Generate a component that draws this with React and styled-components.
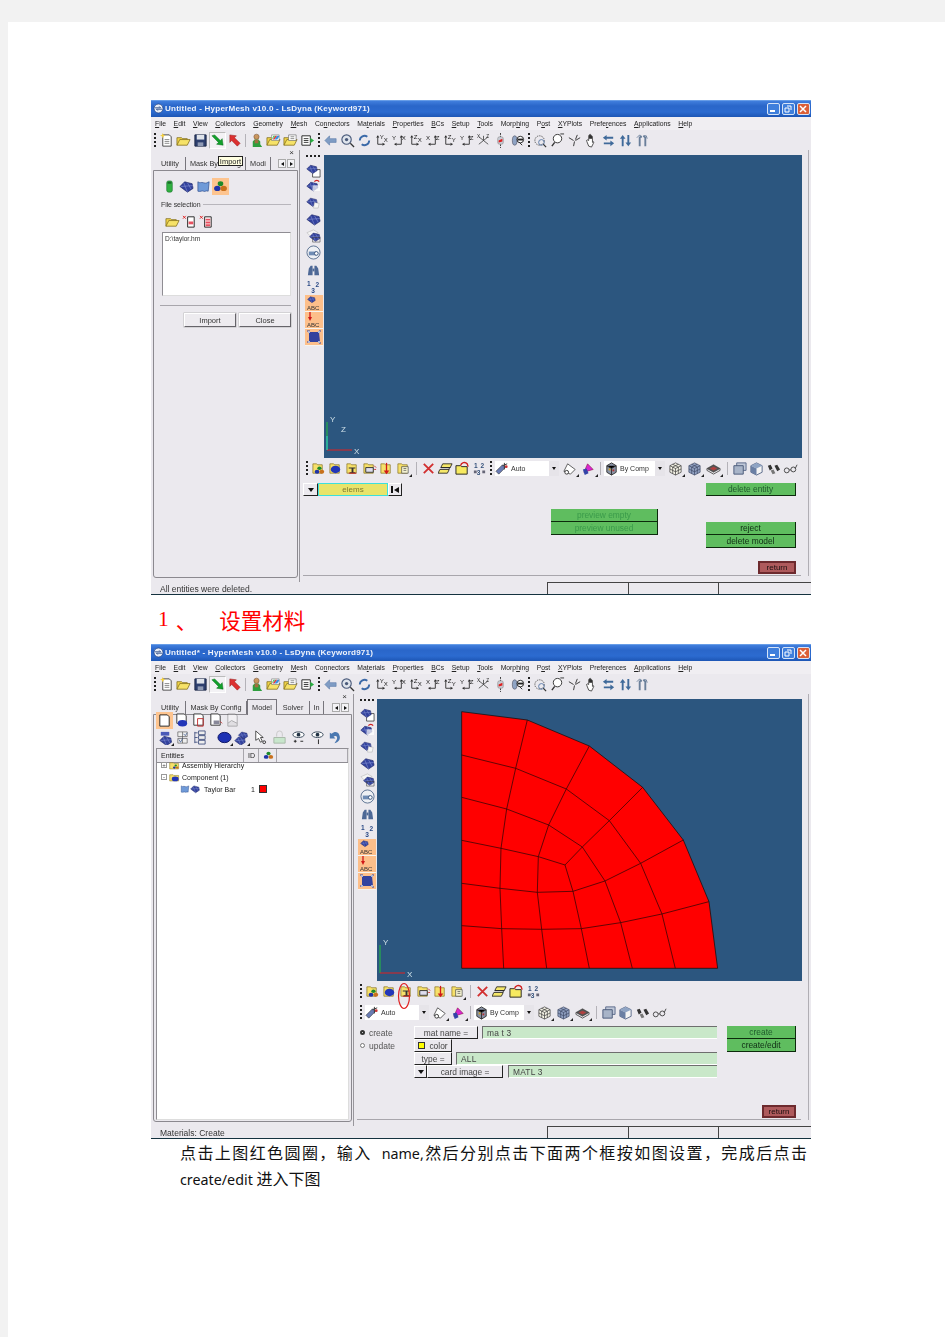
import React from 'react';
import styled, { createGlobalStyle } from 'styled-components';

const GlobalStyle = createGlobalStyle`
  body {
    margin: 0;
    background: #f2f2f2;
  }
`;

const Sheet = styled.div`
  margin: 22px 0 0 8px;
  padding: 78px 0 0 143px;
  min-height: 1237px;
  background: #fff;
  overflow: hidden;
`;

const Heading = styled.h2`
  display: flex;
  align-items: center;
  height: 49px;
  margin: 0;
  padding-left: 7px;
  color: #f00;
  font: normal 21.5px 'Liberation Serif', 'Noto Sans CJK SC', serif;
  span:nth-child(2) { margin-left: 7px; }
  span:nth-child(3) { margin-left: 22px; }
`;

const Para = styled.p`
  width: 627px;
  margin: 0 0 0 29px;
  color: #111;
  font: 16px/26px 'Noto Sans CJK SC', sans-serif;
  text-align: justify;
  span { font: 14.3px 'Noto Sans', sans-serif; white-space: nowrap; }
`;

/* ---- window chrome ---- */

const Win = styled.div`
  position: relative;
  width: 660px;
  height: 495px;
  box-sizing: border-box;
  display: flex;
  flex-direction: column;
  background: #ebe9ee;
  border-bottom: 1px solid #14323f;
  color: #222;
  font-family: 'Liberation Sans', sans-serif;
  filter: blur(0.3px);
`;

const TitleBar = styled.div`
  height: 17px;
  flex: none;
  display: flex;
  align-items: center;
  padding: 0 1px 0 2px;
  background: linear-gradient(#7fb0ee 0, #3f7ddc 8%, #2a66c9 35%, #2c6bd0 70%, #1d56b5 100%);
  color: #eef3fb;
  font-size: 8.1px;
  font-weight: bold;
  letter-spacing: 0.2px;
  svg { margin-right: 1px; }
`;

const TitleText = styled.span`
  flex: 1;
`;

const CapBtn = styled.div`
  width: 13px;
  height: 12px;
  margin-left: 2px;
  display: flex;
  align-items: center;
  justify-content: center;
  border: 1px solid #d6e4f7;
  border-radius: 2px;
  box-sizing: border-box;
  background: ${(p) => (p.$close ? '#dc5f36' : '#3f7fdc')};
`;

const MenuBar = styled.div`
  height: 13px;
  flex: none;
  display: flex;
  align-items: center;
  gap: 7.65px;
  padding-left: 4px;
  background: #f0eef2;
  font-size: 6.8px;
  white-space: nowrap;
`;

const Toolbar = styled.div`
  height: ${(p) => p.$h || 19}px;
  flex: none;
  display: flex;
  align-items: center;
  padding-left: 3px;
`;

const Tool = styled.div`
  position: relative;
  width: ${(p) => p.$w || 17}px;
  height: 17px;
  flex: none;
  display: flex;
  align-items: center;
  justify-content: center;
  box-sizing: border-box;
  background: ${(p) => (p.$on ? '#fdc48f' : 'transparent')};
  ${(p) => p.$press && 'border: 1px solid; border-color: #bbb #fff #fff #bbb; background: #f3f2f5;'}
  &::after {
    content: '';
    display: ${(p) => (p.$menu ? 'block' : 'none')};
    position: absolute;
    right: 0;
    bottom: 0;
    border-left: 3px solid transparent;
    border-bottom: 3px solid #222;
  }
`;

const Dots = styled.div`
  width: 2px;
  height: 15px;
  flex: none;
  margin: 0 2px 0 ${(p) => (p.$first ? 0 : 2)}px;
  background: repeating-linear-gradient(#222 0 2px, transparent 2px 4px);
`;

const Sep = styled.div`
  width: 1px;
  height: 13px;
  flex: none;
  margin: ${(p) => (p.$wide ? '0 3px 0 4px' : '0 2px 0 2px')};
  background: #b4b2b8;
`;

const ComboBox = styled.div`
  width: ${(p) => p.$w}px;
  height: 15px;
  flex: none;
  margin: 0 1px;
  display: flex;
  align-items: center;
  background: #fff;
  font-size: 7px;
  color: #333;
  svg { flex: none; }
  span { flex: 1; margin-left: 1px; }
`;

const ComboArrow = styled.div`
  width: 10px;
  height: 100%;
  display: flex;
  align-items: center;
  justify-content: center;
  background: #e6e4e9;
  &::before {
    content: '';
    border: 2.5px solid transparent;
    border-top: 3px solid #111;
    border-bottom: 0;
  }
`;

const Body = styled.div`
  flex: 1;
  min-height: 0;
  display: flex;
  padding-left: 1px;
`;

/* ---- left panel ---- */

const Panel = styled.div`
  position: relative;
  width: ${(p) => p.$w}px;
  flex: none;
  display: flex;
  flex-direction: column;
  padding: 0 1px 4px 1px;
  box-sizing: border-box;
  border-right: 1px solid #98969c;
`;

const TabRow = styled.div`
  height: 20px;
  flex: none;
  display: flex;
  align-items: flex-end;
  padding-left: 2px;
`;

const Tab = styled.div`
  height: ${(p) => (p.$on ? 16 : 13)}px;
  width: ${(p) => p.$w}px;
  flex: none;
  box-sizing: border-box;
  display: flex;
  align-items: center;
  justify-content: center;
  overflow: hidden;
  white-space: nowrap;
  font-size: 7.3px;
  color: #333;
  border-right: 1px solid #77757c;
  ${(p) => p.$on && 'border-left: 1px solid #77757c; border-top: 1px solid #77757c; background: #ebe9ee; margin-bottom: -1px; z-index: 1;'}
`;

const TabArrows = styled.div`
  margin: 0 2px 2px auto;
  display: flex;
  gap: 1px;
  padding-right: 1px;
`;

const TabArrow = styled.div`
  width: 8px;
  height: 9px;
  display: flex;
  align-items: center;
  justify-content: center;
  background: #f4f3f6;
  border: 1px solid #aaa;
  box-sizing: border-box;
  &::before {
    content: '';
    border: 2px solid transparent;
    ${(p) => (p.$left ? 'border-right: 3px solid #111; border-left: 0;' : 'border-left: 3px solid #111; border-right: 0;')}
  }
`;

const CloseMark = styled.div`
  position: absolute;
  top: -2px;
  right: ${(p) => p.$r}px;
  font-size: 8px;
  color: #333;
`;

const Tip = styled.div`
  position: absolute;
  left: 66px;
  top: 6px;
  width: 25px;
  height: 10px;
  line-height: 9px;
  box-sizing: border-box;
  text-align: center;
  background: #ffffe1;
  border: 1px solid #222;
  font-size: 7.5px;
  z-index: 2;
`;

const TabBox = styled.div`
  flex: 1;
  min-height: 0;
  display: flex;
  flex-direction: column;
  border: 1px solid #8b898f;
  border-radius: 0 0 3px 3px;
  box-sizing: border-box;
`;

const IconLine = styled.div`
  display: flex;
  align-items: center;
  flex: none;
  margin: ${(p) => p.$m};
  gap: ${(p) => p.$gap || 0}px;
`;

const GroupLabel = styled.div`
  margin: 6px 6px 0 7px;
  display: flex;
  align-items: center;
  gap: 3px;
  font-size: 7px;
  letter-spacing: -0.1px;
  color: #333;
  &::after {
    content: '';
    flex: 1;
    height: 1px;
    background: #b8b6bc;
  }
`;

const FileList = styled.div`
  height: 64px;
  margin: 2px 6px 0 8px;
  padding: 2px 2px;
  box-sizing: border-box;
  background: #fff;
  border: 1px solid;
  border-color: #8f8d93 #ddd #ddd #8f8d93;
  font-size: 6.6px;
  color: #333;
`;

const Rule = styled.div`
  height: 1px;
  margin: 9px 6px 0 6px;
  background: #a8a6ac;
`;

const PanelButtons = styled.div`
  display: flex;
  justify-content: flex-end;
  gap: 3px;
  margin: 7px 6px 0 0;
`;

const PanelButton = styled.div`
  width: 52px;
  height: 14px;
  display: flex;
  align-items: center;
  justify-content: center;
  box-sizing: border-box;
  background: #edebef;
  border: 1px solid;
  border-color: #fff #66646a #66646a #fff;
  box-shadow: 0 0 0 0.5px #bbb;
  font-size: 7.5px;
  color: #333;
`;

const Tree = styled.div`
  flex: 1;
  margin: 2px 2px 1px 2px;
  background: #fff;
  border: 1px solid;
  border-color: #8f8d93 #ddd #ddd #8f8d93;
  font-size: 7px;
  color: #222;
`;

const TreeHead = styled.div`
  height: 13px;
  margin-bottom: -4px;
  display: grid;
  grid-template-columns: 87px 15px 18px 1fr;
  background: #ebe9ee;
  border-bottom: 1px solid #8f8d93;
  div {
    display: flex;
    align-items: center;
    padding-left: 4px;
    border-right: 1px solid #a8a6ac;
  }
`;

const TreeRow = styled.div`
  position: relative;
  height: 12px;
  display: flex;
  align-items: center;
  padding-left: ${(p) => p.$indent}px;
  svg { flex: none; }
`;

const TreeCell = styled.span`
  width: ${(p) => p.$w}px;
  margin-left: ${(p) => p.$ml || 0}px;
  flex: none;
`;

const Expander = styled.div`
  width: 6px;
  height: 6px;
  margin-right: 2px;
  box-sizing: border-box;
  border: 1px solid #999;
  font-size: 6px;
  line-height: 4px;
  text-align: center;
  color: #444;
`;

const Swatch = styled.div`
  width: ${(p) => p.$s}px;
  height: ${(p) => p.$s}px;
  flex: none;
  background: ${(p) => p.$c};
  border: 1px solid #333;
  box-sizing: border-box;
`;

/* ---- graphics area ---- */

const Right = styled.div`
  flex: 1;
  min-width: 0;
  margin-left: ${(p) => p.$gap}px;
  margin-bottom: 6px;
  display: flex;
  flex-direction: column;
  border-right: 1px solid #b0aeb4;
  margin-right: 2px;
`;

const Stage = styled.div`
  height: ${(p) => p.$h}px;
  flex: none;
  display: flex;
  padding-top: 5px;
  box-sizing: content-box;
`;

const Strip = styled.div`
  width: ${(p) => p.$w}px;
  flex: none;
  display: flex;
  flex-direction: column;
  align-items: center;
`;

const StripDots = styled.div`
  width: 15px;
  height: 2px;
  margin-bottom: 5px;
  background: repeating-linear-gradient(90deg, #222 0 2px, transparent 2px 4px);
`;

const StripCell = styled.div`
  width: 18px;
  height: 17px;
  display: flex;
  align-items: center;
  justify-content: center;
  flex: none;
  box-sizing: border-box;
  background: ${(p) => (p.$on ? '#fdbf8a' : 'transparent')};
  ${(p) => p.$on && 'border-bottom: 1px solid #f6f3ee;'}
  ${(p) => p.$tight && 'margin-bottom: -3px;'}
`;

const Viewport = styled.div`
  position: relative;
  width: ${(p) => p.$w}px;
  flex: none;
  background: #2c567f;
  overflow: hidden;
`;

const Triad = styled.svg`
  position: absolute;
  left: 0;
  bottom: 0;
`;

const MeshSvg = styled.svg`
  position: absolute;
  left: 0;
  top: 0;
`;

const Annot = styled.svg`
  position: absolute;
  left: 246px;
  top: 337px;
  z-index: 3;
`;

const Controls = styled.div`
  flex: 1;
  min-height: 0;
  display: flex;
  margin-right: 7px;
  border-bottom: 1px solid #a8a6ac;
`;

const Col = styled.div`
  display: flex;
  flex-direction: column;
  flex: none;
  width: ${(p) => p.$w}px;
  margin-left: ${(p) => p.$ml || 0}px;
  padding-top: ${(p) => p.$pt || 0}px;
  padding-bottom: 1px;
  box-sizing: border-box;
`;

const Row = styled.div`
  display: flex;
  flex: none;
  margin-left: ${(p) => p.$ml || 0}px;
`;

const GreenBtn = styled.div`
  height: 13px;
  flex: none;
  margin-top: ${(p) => p.$mt || 0}px;
  display: flex;
  align-items: center;
  justify-content: center;
  box-sizing: border-box;
  background: #5fbd5f;
  border-right: 1px solid #0c2a0c;
  border-bottom: 1px solid #0c2a0c;
  font-size: 8.4px;
  color: ${(p) => (p.$dim ? '#3a9a4a' : p.$soft ? '#1f5a2c' : '#0f2c14')};
`;

const ReturnBtn = styled.div`
  width: ${(p) => p.$w}px;
  height: 13px;
  flex: none;
  margin: auto 0 0 auto;
  display: flex;
  align-items: center;
  justify-content: center;
  box-sizing: border-box;
  background: #ae5a5c;
  border: 2px solid #6d2a2e;
  font-size: 8px;
  color: #1c1010;
`;

const DarkBtn = styled.div`
  width: ${(p) => p.$w}px;
  height: 13px;
  flex: none;
  display: flex;
  align-items: center;
  justify-content: center;
  gap: 4px;
  box-sizing: border-box;
  background: #ebe9ee;
  border: 1px solid;
  border-color: #fff #222 #222 #fff;
  font-size: 8.4px;
  color: #444;
  &::before {
    content: '';
    display: ${(p) => (p.$arrow ? 'block' : 'none')};
    border: 3.5px solid transparent;
    border-top: 4px solid #111;
    border-bottom: 0;
  }
`;

const SkipBtn = styled(DarkBtn)`
  gap: 1px;
  &::before {
    display: block;
    border: 3.5px solid transparent;
    border-right: 5px solid #111;
    border-left: 0;
  }
  i { order: -1; width: 2px; height: 7px; background: #111; }
`;

const Entity = styled.div`
  width: 70px;
  height: 13px;
  display: flex;
  align-items: center;
  justify-content: center;
  box-sizing: border-box;
  background: #e8e46a;
  border: 1px solid #3ce0dc;
  font-size: 8px;
  color: #7d7a30;
`;

const Field = styled.div`
  flex: 1;
  height: 13px;
  margin-left: ${(p) => p.$ml}px;
  padding-left: 4px;
  box-sizing: border-box;
  display: flex;
  align-items: center;
  background: #c9e8c9;
  border-top: 1px solid #6e6e6e;
  border-left: 1px solid #6e6e6e;
  border-bottom: 1px solid #fff;
  font-size: 8.4px;
  color: #444;
  letter-spacing: 0.2px;
`;

const Radio = styled.div`
  display: flex;
  align-items: center;
  gap: 4px;
  height: 13px;
  font-size: 8.5px;
  color: #555;
  &::before {
    content: '';
    width: 5px;
    height: 5px;
    box-sizing: border-box;
    border-radius: 50%;
    border: ${(p) => (p.$on ? '2px solid #333' : '1px solid #777')};
    background: #fff;
  }
`;

const StatusWrap = styled.div`
  height: 12px;
  flex: none;
  display: flex;
  align-items: center;
  padding-left: 9px;
  font-size: 8.5px;
  color: #333;
  span { flex: 1; padding-top: 2px; }
`;

const StatusCell = styled.div`
  width: ${(p) => p.$w}px;
  height: 100%;
  box-sizing: border-box;
  border-top: 1px solid #444;
  border-left: 1px solid #444;
`;

/* ---- icon drawings, 16x16 ---- */

const Blob = ({ x = 0, y = 0, s = 1, c = '#33429e' }) => (
  <g transform={`translate(${x} ${y}) scale(${s})`}>
    <path d="M1 8 6 3l8 2 1 5-6 4z" fill={c} stroke="#1c2566" strokeWidth=".7" />
    <path d="M5 4 9 14M9 4 13 11M2 8 15 7" stroke="#9aa8e0" strokeWidth=".5" fill="none" />
  </g>
);

const FolderBack = () => <path d="M2 5V3h4l1 1h5v9H2z" fill="#f6e06a" stroke="#7d6a18" strokeWidth=".7" />;

const FolderOpen = () => (
  <g>
    <path d="M1 13V5h5l1 1h5v2" fill="#f3d64a" stroke="#7d6a18" strokeWidth=".8" />
    <path d="M1 13l3-6h11l-3 6z" fill="#f6e268" stroke="#7d6a18" strokeWidth=".8" />
  </g>
);

const Balls = ({ x = 0, y = 0, s = 1 }) => (
  <g transform={`translate(${x} ${y}) scale(${s})`}>
    <ellipse cx="8" cy="5" rx="3" ry="2.6" fill="#1d8a2a" />
    <ellipse cx="4.6" cy="10" rx="3.4" ry="2.8" fill="#1f33a8" />
    <ellipse cx="11.4" cy="10" rx="3.4" ry="2.8" fill="#c8701c" />
  </g>
);

const AxisL = ({ a, b }) => (
  <g>
    <path d="M4 3v9h7M3 5l1-2 1 2M9 11l2 1-2 1" stroke="#222" strokeWidth=".9" fill="none" />
    <text x="6" y="6.500" fontSize="6.500" fill="#222">{a}</text>
    <text x="10.500" y="10" fontSize="6.500" fill="#222">{b}</text>
  </g>
);

const AxisR = ({ a, b }) => (
  <g>
    <path d="M11 3v9H4M10 5l1-2 1 2M6 11l-2 1 2 1" stroke="#222" strokeWidth=".9" fill="none" />
    <text x="1" y="7" fontSize="6.500" fill="#222">{a}</text>
    <text x="11.500" y="7" fontSize="6.500" fill="#222">{b}</text>
  </g>
);

const MeshCard = () => (
  <g>
    <path d="M7 7h8v8H7z" fill="#fff" stroke="#333" strokeWidth=".8" />
    <Blob x={0} y={0} s={0.8} />
  </g>
);

const ICONS = {
  new: <g><path d="M4 2h7l2 2v10H4z" fill="#fff" stroke="#333" strokeWidth=".9" /><path d="M6 7h5M6 9h5M6 11h5" stroke="#555" strokeWidth=".7" /><path d="M4 0l1 2 2 .5-2 1-1 2-1-2-2-1 2-.5z" fill="#f4d040" /></g>,
  open: <FolderOpen />,
  save: <g><path d="M2 2h12v12H2z" fill="#2d3f6e" stroke="#1c2746" /><path d="M4 2h8v5H4z" fill="#dfe3ea" /><path d="M5 10h6v4H5z" fill="#8f9ab4" /></g>,
  imp: <path d="M2 3l3-1 6 6 2-2 1 7-7-1 2-2-6-6z" fill="#12a02c" stroke="#0c6a1c" strokeWidth=".5" />,
  exp: <path d="M3 2l7 1-2 2 6 6-3 3-6-6-2 2z" fill="#dc3030" stroke="#8c1818" strokeWidth=".5" />,
  user: <g><circle cx="8" cy="4" r="2.8" fill="#c9965f" stroke="#6a4020" strokeWidth=".5" /><path d="M4 15V9l2-2h4l2 2v3l2 3z" fill="#2e9e3e" /><path d="M6 7h4v4H6z" fill="#a07040" /></g>,
  fcolor: <g><FolderOpen /><path d="M6 2h8v6H6z" fill="#fff" stroke="#555" strokeWidth=".5" /><path d="M7 7l3-4h2l-3 4z" fill="#e03a3a" /><path d="M9 7l3-4h2v1l-2 3z" fill="#3a8ee0" /><path d="M6 7l2-4h2z" fill="#3ac050" /></g>,
  fdoc: <g><FolderOpen /><path d="M6 2h8v6H6z" fill="#fff" stroke="#555" strokeWidth=".6" /><path d="M8 4h4M8 6h4" stroke="#555" strokeWidth=".7" /></g>,
  docarrow: <g><path d="M2 3h9v10H2z" fill="#fff" stroke="#222" /><path d="M4 6h5M4 8h5M4 10h5" stroke="#333" /><path d="M11 5l4 3-4 3z" fill="#28b040" /></g>,
  back: <path d="M2 8l5-5v3h7v4H7v3z" fill="#7f9cc4" stroke="#5a7aa8" strokeWidth=".6" />,
  zoomgear: <g><circle cx="7" cy="7" r="5" fill="#dfe4ec" stroke="#4a5a7a" strokeWidth="1.2" /><circle cx="7" cy="7" r="1.8" fill="#4a5a7a" /><path d="M11 11l4 4" stroke="#333" strokeWidth="1.4" /></g>,
  rotate: <g fill="none" stroke="#3c6aa8" strokeWidth="2"><path d="M3 8a5 5 0 0 1 8-4" /><path d="M13 8a5 5 0 0 1-8 4" /></g>,
  axYX: <AxisL a="Y" b="X" />,
  axXY: <AxisR a="Y" b="X" />,
  axZX: <AxisL a="Z" b="X" />,
  axXZ: <AxisR a="X" b="Z" />,
  axZY: <AxisL a="Z" b="Y" />,
  axYZ: <AxisR a="Y" b="Z" />,
  axIso: <g stroke="#333" strokeWidth=".8" fill="none"><path d="M8 8V3M8 8l-5 4M8 8l5 4M8 8l-5-4M8 8l5-4" /><text x="1" y="5" fontSize="5" fill="#333" stroke="none">X</text><text x="11" y="5" fontSize="5" fill="#333" stroke="none">Z</text></g>,
  section: <g><path d="M8 0v16" stroke="#333" strokeDasharray="2 1" /><rect x="5" y="4" width="6" height="8" rx="2" fill="#c8ccd4" stroke="#777" strokeWidth=".5" /><path d="M6 8l4-2v3l-4 1z" fill="#e02020" /></g>,
  eyes: <g><ellipse cx="5" cy="8" rx="2.5" ry="5" fill="#8fa4c4" stroke="#445" strokeWidth=".6" /><circle cx="11" cy="7" r="3.5" fill="#fff" stroke="#222" /><path d="M8 6h6v2H8z" fill="#222" /><path d="M10 10l3 3" stroke="#222" /></g>,
  zoomdash: <g><circle cx="7" cy="8" r="5" fill="none" stroke="#555" strokeWidth="1" strokeDasharray="1.5 1" /><circle cx="9" cy="10" r="3" fill="none" stroke="#5a7aa8" /><path d="M11 12l3 3" stroke="#333" strokeWidth="1.2" /></g>,
  zoomin: <g><circle cx="8" cy="6" r="4.5" fill="#fff" stroke="#333" /><path d="M5 10l-3 4" stroke="#333" strokeWidth="1.5" /><path d="M11 1h4" stroke="#333" /></g>,
  star: <g stroke="#333" strokeWidth="1" fill="none"><path d="M7 8L2 5M8 9l-1 5M9 8l5-3M9 7l2-5" /></g>,
  hand: <path d="M5 14L3 9c-1-2 1-2 2-1V3c0-1 1-1 1 0v3-4c0-1 1-1 1 0v4-3c0-1 1-1 1 0v3-2c0-1 1-1 1 0v6c1-1 2-1 1 1l-2 4z" fill="#fff" stroke="#222" strokeWidth=".8" />,
  lr: <path d="M6 2L2 5l4 3V6h7V4H6zM10 8l4 3-4 3v-2H3v-2h7z" fill="#3f6a9a" />,
  ud: <path d="M5 2L2 6h2v8h2V6h2zM11 14l3-4h-2V2h-2v8H8z" fill="#3f6a9a" />,
  rot: <g fill="none" stroke="#6a7f9a" strokeWidth="2"><path d="M5 14V5l2-2" /><path d="M11 14V5L9 3" /><path d="M2 5l3-3 2 3M9 3l3 0 1 3" strokeWidth="1" /></g>,
  fcomp: <g><FolderBack /><Balls x={3} y={4} s={0.75} /></g>,
  fblob: <g><FolderBack /><ellipse cx="8" cy="9" rx="5" ry="4" fill="#2236b8" /></g>,
  fmat: <g><FolderBack /><path d="M4 7h7v1H9v4h2v1H5v-1h2V8H4z" fill="#333" /><path d="M4 13h8" stroke="#c22" /></g>,
  fprop: <g><FolderBack /><path d="M4 7h8v5H4z" fill="#dde" stroke="#333" /><path d="M13 5l2 2M13 9l2 0" stroke="#c33" /></g>,
  fload: <g><FolderBack /><path d="M8 2v10" stroke="#d01818" strokeWidth="1.4" /><path d="M5 10l3 4 3-4z" fill="#d01818" /></g>,
  fcustom: <g><FolderBack /><path d="M6 6h7v7H6z" fill="#f4f2d0" stroke="#444" strokeWidth=".7" /><path d="M8 8h3M8 10h3" stroke="#444" strokeWidth=".7" /></g>,
  x: <path d="M3 3l10 10M13 3L3 13" stroke="#d23030" strokeWidth="2" />,
  sheets: <g fill="#f6e86a" stroke="#222" strokeWidth=".9"><path d="M5 3h10l-2 4H3z" /><path d="M3 7h10l-2 2" fill="none" /><path d="M2 9h10l-2 4H0z" /></g>,
  openred: <g><path d="M1 5h5l1 1h6v8H1z" fill="#f7ea60" stroke="#222" /><path d="M6 5a4 4 0 0 1 7-2l1 3" stroke="#d02020" strokeWidth="1.5" fill="none" /></g>,
  numbers: <g fill="#33507a" fontSize="7" fontWeight="bold"><text x="2" y="7">1</text><text x="9" y="7">2</text><text x="5" y="15">3</text><path d="M2 10h3v3H2zM11 10h3v3h-3z" fill="#667" /></g>,
  auto: <g><path d="M1 11l7-7 3 3-7 7z" fill="#6a7cb4" stroke="#333" strokeWidth=".6" /><path d="M10 2v7M8 5l5-2" stroke="#333" /><circle cx="12" cy="6" r="1.5" fill="#c33" /></g>,
  cone: <g><path d="M2 11l4-8 8 6-5 5z" fill="#fff" stroke="#333" strokeWidth=".8" /><circle cx="5" cy="12" r="2" fill="#fff" stroke="#333" /></g>,
  conefill: <g><path d="M3 12l4-9 6 6z" fill="#d828d0" stroke="#702" strokeWidth=".5" /><path d="M2 9l4-1 2 5-4 2z" fill="#3344a8" /></g>,
  bycomp: <g><path d="M3 5l5-3 5 3v7l-5 3-5-3z" fill="#8b95a8" stroke="#333" /><path d="M3 5l5 3 5-3M8 8v7" stroke="#333" /><path d="M5 8h2v2H5z" fill="#d0a020" /><path d="M9 9h2v2H9z" fill="#b03030" /></g>,
  wire: <g fill="#f3f1e4" stroke="#333" strokeWidth=".7"><path d="M2 5l6-3 6 3v7l-6 3-6-3z" /><path d="M2 5l6 3 6-3M8 8v7M5 3.5l6 3v7M11 3.5l-6 3v7M2 8.500l6 3 6-3" fill="none" /></g>,
  solidwire: <g fill="#8f9fc0" stroke="#3a4560" strokeWidth=".7"><path d="M2 5l6-3 6 3v7l-6 3-6-3z" /><path d="M2 5l6 3 6-3M8 8v7M5 3.5l6 3v7M11 3.5l-6 3v7M2 8.500l6 3 6-3" fill="none" /></g>,
  plate: <g><path d="M1 8l7-4 7 4-7 4z" fill="#555" stroke="#222" strokeWidth=".5" /><path d="M4 8l4-2 4 2-4 2z" fill="#b04040" /><path d="M1 8v2l7 4 7-4V8" fill="none" stroke="#555" /></g>,
  frames: <g><path d="M5 2h10v8H5z" fill="#c0c8d8" stroke="#5a6a8a" /><path d="M2 5h10v9H2z" fill="#a8b4c8" stroke="#4a5a7a" /></g>,
  cube: <g><path d="M2 5l6-3 6 3v7l-6 3-6-3z" fill="#f4f4f4" stroke="#5a6a8a" /><path d="M2 5l6-3 6 3-6 3z" fill="#8fa4c4" /><path d="M2 5l6 3v7l-6-3z" fill="#6a7fa4" /></g>,
  binsmall: <g fill="#333"><path d="M2 5l3-1 2 4-3 2zM9 5l3-1 3 5-3 2z" /><path d="M5 10l3-1 2 4-3 1z" fill="#777" /></g>,
  glasses: <g fill="none" stroke="#444"><circle cx="4" cy="10" r="2.6" /><circle cx="11" cy="9" r="2.6" /><path d="M6.500 9.500l2 0M13 8l2-4" /></g>,
  m1: <MeshCard />,
  m2: <g><Blob s={0.85} y={3} /><path d="M9 5a3 3 0 0 1 5 0" stroke="#d02020" strokeWidth="1.300" fill="none" /><path d="M7 9h8v6H7z" fill="#fff" opacity=".7" /></g>,
  m3: <g><Blob s={0.8} y={2} /><path d="M9 9l5 1-1 5H8z" fill="#f6f6f6" stroke="#aaa" strokeWidth=".5" /></g>,
  m4: <Blob y={1} />,
  m5: <g><path d="M1 5l7-3 5 3-8 4z" fill="#f4f4f4" stroke="#aaa" strokeWidth=".5" /><Blob s={0.8} x={3} y={3} /><path d="M7 10h8v5H7z" fill="none" stroke="#444" strokeWidth=".6" /></g>,
  disc: <g><circle cx="8" cy="8" r="7" fill="#eef0f4" stroke="#5a7090" /><path d="M3 7h8v4H3z" fill="#6f8cb4" /><circle cx="11" cy="9" r="2" fill="#fff" stroke="#34507a" /></g>,
  binoc: <g fill="#4d6896"><path d="M2 14l1-7 2-3h2v10zM9 14V4h2l2 3 1 7z" /><path d="M7 7h2v3H7z" /></g>,
  num123: <g fill="#2a4a86" fontSize="7" fontWeight="bold" fontFamily="Liberation Sans"><text x="1" y="7">1</text><text x="10" y="8">2</text><text x="5.500" y="15">3</text></g>,
  abc1: <g><Blob s={0.55} x={1} /><text x="1" y="15" fontSize="6" fill="#333">ABC</text></g>,
  abc2: <g><path d="M4 0v7" stroke="#d01818" strokeWidth="1.300" /><path d="M2 5l2 4 2-4z" fill="#d01818" /><text x="1" y="15" fontSize="6" fill="#333">ABC</text></g>,
  quad: <g><path d="M3 3h10l1 10H3z" fill="#33429e" /><path d="M1 2h3M13 2h2M1 13h3M13 14h2" stroke="#33429e" /><path d="M2 2h2v2H2zM12 2h2v2h-2zM2 12h2v2H2zM12 12h2v2h-2z" fill="#b0b8d8" /></g>,
  cyl: <g><rect x="5" y="2" width="6" height="12" rx="2" fill="#30b040" stroke="#17702a" strokeWidth=".6" /><path d="M6 3h4v2H6z" fill="#1c6a2c" /></g>,
  blob: <Blob />,
  surf: <path d="M2 3c3 2 3 0 6 1s3 0 6-1l-1 10c-3-1-3 1-5 0s-3 1-6 0z" fill="#6f9ad8" stroke="#2c4a8a" strokeWidth=".7" />,
  rgb: <Balls />,
  del1: <g><path d="M6 3h7v11H6z" fill="#fff" stroke="#222" /><path d="M7 8h5v3H7z" fill="#e85060" /><path d="M1 2l3 3M4 2L1 5" stroke="#e02020" /></g>,
  del2: <g><path d="M6 3h7v11H6z" fill="#fff" stroke="#222" /><path d="M7 5h5v2H7zM7 8h5v2H7zM7 11h5v2H7z" fill="#e85060" /><path d="M1 2l3 3M4 2L1 5" stroke="#e02020" /></g>,
  page: <path d="M3 2h8l2 2v10H3z" fill="#fff" stroke="#222" />,
  pageblob: <g><path d="M3 1h8l2 2v8H3z" fill="#fff" stroke="#333" /><ellipse cx="9" cy="11" rx="5" ry="3.500" fill="#2236b8" /></g>,
  pagemat: <g><path d="M3 1h8l2 2v10H3z" fill="#fff" stroke="#333" /><path d="M7 6h6v8H7z" fill="none" stroke="#c03030" /></g>,
  pageprop: <g><path d="M3 1h8l2 2v10H3z" fill="#fff" stroke="#333" /><path d="M6 8h6v4H6z" fill="#889" /><path d="M13 9l2 2" stroke="#c33" /></g>,
  pagedim: <g opacity=".35"><path d="M3 1h8l2 2v8H3z" fill="#fff" stroke="#333" /><path d="M3 11l4-3 6 3v3H3z" fill="#ccc" stroke="#333" /></g>,
  comp: <g><path d="M3 2h9v4H3z" fill="#4a5ab8" /><Blob x={1} y={4} s={0.9} /></g>,
  chk1: <g fill="#eee" stroke="#555" strokeWidth=".7"><path d="M3 2h10v5H3zM3 9h10v5H3z" /><path d="M8 2v12" /><path d="M9 4l2 2 2-3M4 10l2 3 2-4" stroke="#2a4a86" fill="none" /></g>,
  chk2: <g stroke="#3a4a7a" strokeWidth=".9" fill="#eee"><path d="M3 2v12M3 3h3M3 8h3M3 13h3" fill="none" /><path d="M7 1h7v4H7zM7 6h7v4H7zM7 11h7v4H7z" /></g>,
  bigblob: <ellipse cx="8" cy="8" rx="7" ry="5.500" fill="#1e32b4" stroke="#111a66" />,
  blobs: <g><Blob x={4} s={0.7} /><Blob y={5} s={0.8} /></g>,
  cursor: <g><path d="M4 1v10l3-2 2 4 2-1-2-4h3z" fill="#fff" stroke="#222" strokeWidth=".8" /><circle cx="13" cy="13" r="1.500" fill="none" stroke="#333" /></g>,
  lock: <g><path d="M5 7V4a3 3 0 0 1 6 0v3" fill="none" stroke="#c8c8c8" /><path d="M2 8h12v6H2z" fill="#c8e6cc" stroke="#a8b8a8" /></g>,
  eyepm: <g><ellipse cx="8" cy="5" rx="6" ry="3" fill="#fff" stroke="#345" /><circle cx="8" cy="5" r="2" fill="#234" /><path d="M3 12h3M4.500 10.500v3M10 12h3" stroke="#222" /></g>,
  eye1: <g><ellipse cx="8" cy="5" rx="6" ry="3" fill="#fff" stroke="#345" /><circle cx="8" cy="5" r="2" fill="#234" /><path d="M9 10v5" stroke="#222" /></g>,
  undo: <path d="M3 3v6h6L7 7c3-2 5 1 3 4l-2 3c5-1 7-5 5-9-1-3-5-4-8-1z" fill="#4a78b0" />,
  logo: <g><circle cx="8" cy="8" r="6.500" fill="#e8eef8" stroke="#1a3a7a" /><path d="M3 7h8L9 5M13 9H5l2 2" stroke="#1a3a7a" strokeWidth="1.200" fill="none" /></g>,
  tfolder: <g><path d="M1 13V4h5l1 1h7v8z" fill="#f6e06a" stroke="#7d6a18" strokeWidth=".7" /><ellipse cx="9" cy="10" rx="5" ry="3.500" fill="#2236b8" /></g>,
  tasm: <g><path d="M1 13V4h5l1 1h7v8z" fill="#f6e06a" stroke="#7d6a18" strokeWidth=".7" /><Balls x={5} y={5} s={0.6} /></g>,
};

const Ico = ({ name, size = 15 }) => (
  <svg width={size} height={size} viewBox="0 0 16 16" fontFamily="Liberation Sans, sans-serif">
    {ICONS[name]}
  </svg>
);

// tokens: dots, sep, sep+ ; suffix * pressed, ^ has a corner arrow, + wider cell, ! orange
const ToolItem = ({ t, first }) => {
  if (t === 'dots') return <Dots $first={first} />;
  if (t === 'sep') return <Sep />;
  if (t === 'sep+') return <Sep $wide />;
  if (typeof t === 'object') {
    return (
      <ComboBox $w={t.w}>
        <Ico name={t.icon} />
        <span>{t.label}</span>
        <ComboArrow />
      </ComboBox>
    );
  }
  const name = t.replace(/[*^+!]/g, '');
  return (
    <Tool $press={t.includes('*')} $menu={t.includes('^')} $on={t.includes('!')} $w={t.includes('+') ? 19 : 17}>
      <Ico name={name} />
    </Tool>
  );
};

const Tools = ({ items, h }) => (
  <Toolbar $h={h}>
    {items.map((t, i) => (
      <ToolItem key={i} t={t} first={i === 0} />
    ))}
  </Toolbar>
);

const MENUS = ['&File', '&Edit', '&View', '&Collectors', '&Geometry', '&Mesh', 'Co&nnectors', 'Ma&terials', '&Properties', '&BCs', '&Setup', '&Tools', 'Morp&hing', 'P&ost', '&XYPlots', 'Prefe&rences', '&Applications', '&Help'];

const Menu = ({ label }) => {
  const [a, b] = label.split('&');
  return (
    <span>
      {a}
      <u>{b[0]}</u>
      {b.slice(1)}
    </span>
  );
};

const TOP_TOOLS = ['dots', 'new', 'open', 'save', 'imp*', 'exp', 'sep', 'user', 'fcolor', 'fdoc', 'docarrow', 'dots', 'back', 'zoomgear', 'rotate', 'axYX', 'axXY', 'axZX', 'axXZ', 'axZY', 'axYZ', 'axIso', 'section', 'eyes', 'dots', 'zoomdash', 'zoomin', 'star', 'hand', 'lr', 'ud', 'rot'];
const COLLECTOR_TOOLS = ['dots', 'fcomp', 'fblob', 'fmat', 'fprop', 'fload', 'fcustom^', 'sep+', 'x', 'sheets', 'openred', 'numbers'];
const AUTO = { icon: 'auto', label: 'Auto', w: 64 };
const VIS_A = ['cone^+', 'conefill^+', 'sep'];
const VIS_B = ['wire^+', 'solidwire^+', 'plate^+', 'sep+', 'frames', 'cube', 'binsmall', 'glasses'];
const STRIP = ['m1', 'm2', 'm3', 'm4', 'm5', 'disc', 'binoc', 'num123', 'abc1!', 'abc2!', 'quad!'];

const VStrip = ({ w }) => (
  <Strip $w={w}>
    <StripDots />
    {STRIP.map((s, i) => (
      <StripCell key={s} $on={s.includes('!')} $tight={i === 0}>
        <Ico name={s.replace('!', '')} size={i > 7 ? 16 : 15} />
      </StripCell>
    ))}
  </Strip>
);

const StatusBar = ({ text }) => (
  <StatusWrap>
    <span>{text}</span>
    <StatusCell $w={81} />
    <StatusCell $w={90} />
    <StatusCell $w={93} />
  </StatusWrap>
);

const Window = ({ title, width, gap, stageH, vpW, stripW, tools, controls, panel, status, children }) => (
  <Win>
    <TitleBar>
      <Ico name="logo" size={11} />
      <TitleText>{title}</TitleText>
      <CapBtn><svg width="7" height="7"><path d="M0 6h5" stroke="#fff" strokeWidth="2" /></svg></CapBtn>
      <CapBtn><svg width="8" height="8" fill="none" stroke="#fff"><path d="M3 1h4v4M1 3h4v4H1z" /></svg></CapBtn>
      <CapBtn $close><svg width="8" height="8" stroke="#fff" strokeWidth="1.500"><path d="M1 1l6 6M7 1L1 7" /></svg></CapBtn>
    </TitleBar>
    <MenuBar>
      {MENUS.map((m) => <Menu key={m} label={m} />)}
    </MenuBar>
    <Tools items={TOP_TOOLS} h={20} />
    <Body>
      <Panel $w={width}>{panel}</Panel>
      <Right $gap={gap}>
        <Stage $h={stageH}>
          <VStrip w={stripW} />
          <Viewport $w={vpW}>{children}</Viewport>
        </Stage>
        {tools}
        <Controls>{controls}</Controls>
      </Right>
    </Body>
    <StatusBar text={status} />
  </Win>
);

const ImportPanel = () => (
  <>
    <CloseMark $r={5}>×</CloseMark>
    <Tip>Import</Tip>
    <TabRow>
      <Tab $w={31}>Utility</Tab>
      <Tab $w={60}>Mask By Config</Tab>
      <Tab $w={25}>Modi</Tab>
      <TabArrows><TabArrow $left /><TabArrow /></TabArrows>
    </TabRow>
    <TabBox>
      <IconLine $m="7px 0 0 7px">
        <Tool><Ico name="cyl" /></Tool>
        <Tool><Ico name="blob" /></Tool>
        <Tool><Ico name="surf" /></Tool>
        <Tool $on><Ico name="rgb" /></Tool>
      </IconLine>
      <GroupLabel>File selection</GroupLabel>
      <IconLine $m="5px 0 0 10px">
        <Tool><Ico name="open" /></Tool>
        <Tool><Ico name="del1" /></Tool>
        <Tool><Ico name="del2" /></Tool>
      </IconLine>
      <FileList>D:\taylor.hm</FileList>
      <Rule />
      <PanelButtons>
        <PanelButton>Import</PanelButton>
        <PanelButton>Close</PanelButton>
      </PanelButtons>
    </TabBox>
  </>
);

const ModelPanel = () => (
  <>
    <CloseMark $r={6}>×</CloseMark>
    <TabRow>
      <Tab $w={31}>Utility</Tab>
      <Tab $w={61}>Mask By Config</Tab>
      <Tab $w={30} $on>Model</Tab>
      <Tab $w={33}>Solver</Tab>
      <Tab $w={14}>In</Tab>
      <TabArrows><TabArrow $left /><TabArrow /></TabArrows>
    </TabRow>
    <TabBox>
      <IconLine $m="-3px 0 0 2px">
        <Tool $on><Ico name="page" /></Tool>
        <Tool><Ico name="pageblob" /></Tool>
        <Tool><Ico name="pagemat" /></Tool>
        <Tool><Ico name="pageprop" /></Tool>
        <Tool><Ico name="pagedim" /></Tool>
      </IconLine>
      <IconLine $m="0 0 0 3px">
        <Tool $menu><Ico name="comp" /></Tool>
        <Tool><Ico name="chk1" /></Tool>
        <Tool><Ico name="chk2" /></Tool>
        <Tool $w={8} />
        <Tool $menu><Ico name="bigblob" /></Tool>
        <Tool $menu><Ico name="blobs" /></Tool>
        <Tool $w={19}><Ico name="cursor" /></Tool>
        <Tool $w={20}><Ico name="lock" /></Tool>
        <Tool $w={19}><Ico name="eyepm" /></Tool>
        <Tool $w={18}><Ico name="eye1" /></Tool>
        <Tool><Ico name="undo" /></Tool>
      </IconLine>
      <Tree>
        <TreeHead>
          <div>Entities</div>
          <div>ID</div>
          <div><Ico name="rgb" size={11} /></div>
          <div />
        </TreeHead>
        <TreeRow $indent={4}>
          <Expander>+</Expander>
          <Ico name="tasm" size={11} />
          <TreeCell $ml={2}>Assembly Hierarchy</TreeCell>
        </TreeRow>
        <TreeRow $indent={4}>
          <Expander>-</Expander>
          <Ico name="tfolder" size={11} />
          <TreeCell $ml={2}>Component (1)</TreeCell>
        </TreeRow>
        <TreeRow $indent={23}>
          <Ico name="surf" size={10} />
          <Ico name="blob" size={10} />
          <TreeCell $w={47} $ml={4}>Taylor Bar</TreeCell>
          <TreeCell $w={8}>1</TreeCell>
          <Swatch $s={8} $c="#f00" />
        </TreeRow>
      </Tree>
    </TabBox>
  </>
);

const DeleteControls = () => (
  <>
    <Col $w={100} $pt={4}>
      <Row>
        <DarkBtn $w={15} $arrow />
        <Entity>elems</Entity>
        <SkipBtn $w={14}><i /></SkipBtn>
      </Row>
    </Col>
    <Col $w={107} $ml={148} $pt={30}>
      <GreenBtn $dim>preview empty</GreenBtn>
      <GreenBtn $dim>preview unused</GreenBtn>
    </Col>
    <Col $w={90} $ml={48} $pt={4}>
      <GreenBtn $soft>delete entity</GreenBtn>
      <GreenBtn $mt={26}>reject</GreenBtn>
      <GreenBtn>delete model</GreenBtn>
      <ReturnBtn $w={38}>return</ReturnBtn>
    </Col>
  </>
);

const MaterialControls = () => (
  <>
    <Col $w={57} $pt={3}>
      <Row $ml={3}><Radio $on>create</Radio></Row>
      <Row $ml={3}><Radio>update</Radio></Row>
    </Col>
    <Col $w={303} $pt={3}>
      <Row>
        <DarkBtn $w={64}>mat name =</DarkBtn>
        <Field $ml={4}>ma t 3</Field>
      </Row>
      <Row>
        <DarkBtn $w={38}><Swatch $s={7} $c="#ff0" />color</DarkBtn>
      </Row>
      <Row>
        <DarkBtn $w={38}>type =</DarkBtn>
        <Field $ml={4}>ALL</Field>
      </Row>
      <Row>
        <DarkBtn $w={13} $arrow />
        <DarkBtn $w={76}>card image =</DarkBtn>
        <Field $ml={5}>MATL 3</Field>
      </Row>
    </Col>
    <Col $w={69} $ml={10} $pt={3}>
      <GreenBtn $soft>create</GreenBtn>
      <GreenBtn>create/edit</GreenBtn>
      <ReturnBtn $w={34}>return</ReturnBtn>
    </Col>
  </>
);

const MESH_LINES = [
  '232,60 197,205 170,327 153,445 150,565 155,686 161,805',
  '418,138 349,267 296,375 265,470 262,577 275,688 290,805',
  '578,262 478,362 397,441 345,495 369,574 394,686 418,805',
  '35,165 197,205 349,267 478,362 572,490 636,642 676,805',
  '35,292 170,327 296,375 397,441 465,543 512,668 547,805',
  '35,421 153,445 265,470 345,495',
  '35,550 150,565 262,577 369,574',
  '35,677 155,686 275,688 394,686',
  '700,420 572,490 465,543 369,574',
  '777,605 636,642 512,668 394,686',
];

const Mesh = () => (
  <MeshSvg width="425" height="282" viewBox="0 0 425 282">
    <g transform="translate(73 1) scale(0.3333)">
      <polygon points="35,35 232,60 418,138 578,262 700,420 777,605 803,805 35,805" fill="#f00" stroke="#1a1010" strokeWidth="2.400" />
      {MESH_LINES.map((l) => (
        <polyline key={l} points={l} fill="none" stroke="#2a0505" strokeWidth="2.200" />
      ))}
    </g>
  </MeshSvg>
);

const AxisTriad = ({ third }) => (
  <Triad width="50" height="50" viewBox="0 0 50 50" fontFamily="Liberation Sans, sans-serif" fontSize="8">
    <path d="M3 14V42" stroke="#22c040" strokeWidth="1" />
    <path d="M3 42H28" stroke="#e02020" strokeWidth="1" />
    <text x="6" y="14" fill="#cfe0e8">Y</text>
    {third && <text x="17" y="24" fill="#cfe0e8">Z</text>}
    {third && <path d="M3 42L3 28" stroke="#30d0d0" />}
    <text x="30" y="46" fill="#cfe0e8">X</text>
  </Triad>
);

const App = () => (
  <>
    <GlobalStyle />
    <Sheet>
      <Window
        title="Untitled - HyperMesh v10.0 - LsDyna (Keyword971)"
        width={148}
        gap={3}
        stageH={303}
        vpW={478}
        stripW={21}
        status="All entities were deleted."
        panel={<ImportPanel />}
        tools={<Tools items={[...COLLECTOR_TOOLS, 'dots', AUTO, ...VIS_A, { icon: 'bycomp', label: 'By Comp', w: 61 }, ...VIS_B]} h={21} />}
        controls={<DeleteControls />}
      >
        <AxisTriad third />
      </Window>
      <Heading>
        <span>1</span>
        <span>、</span>
        <span>设置材料</span>
      </Heading>
      <Window
        title="Untitled* - HyperMesh v10.0 - LsDyna (Keyword971)"
        width={202}
        gap={3}
        stageH={282}
        vpW={425}
        stripW={20}
        status="Materials: Create"
        panel={<ModelPanel />}
        tools={
          <>
            <Tools items={COLLECTOR_TOOLS} h={21} />
            <Annot width="14" height="30" viewBox="0 0 14 30">
              <ellipse cx="7" cy="15" rx="5.500" ry="12.500" fill="none" stroke="#e02020" strokeWidth="1.200" />
            </Annot>
            <Tools items={['dots', AUTO, ...VIS_A, { icon: 'bycomp', label: 'By Comp', w: 60 }, ...VIS_B]} h={21} />
          </>
        }
        controls={<MaterialControls />}
      >
        <Mesh />
        <AxisTriad />
      </Window>
      <Para>
        点击上图红色圆圈，输入&nbsp; <span>name,</span>然后分别点击下面两个框按如图设置，完成后点击 <span>create/edit</span> 进入下图
      </Para>
    </Sheet>
  </>
);

export default App;
